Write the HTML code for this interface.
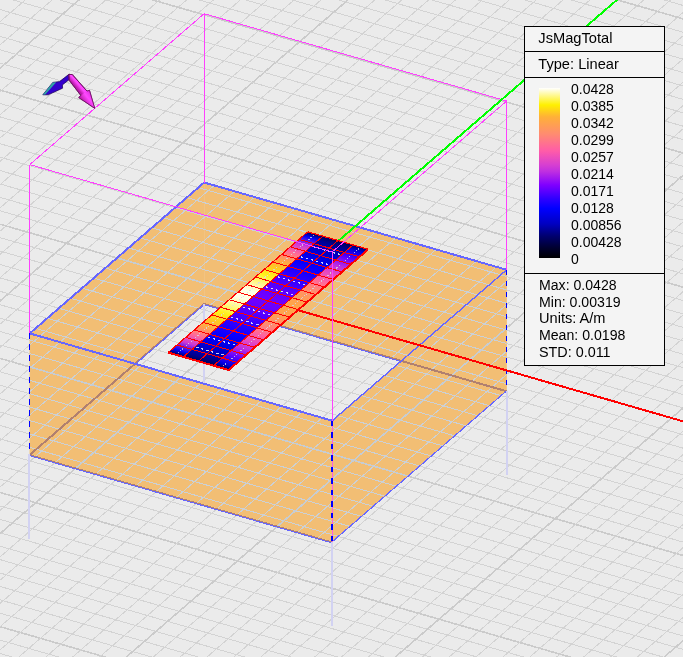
<!DOCTYPE html><html><head><meta charset="utf-8"><style>html,body{margin:0;padding:0;background:#ebebeb;overflow:hidden}svg{display:block;will-change:transform} line{shape-rendering:crispEdges}.t{font-family:"Liberation Sans",sans-serif;font-size:13px;fill:#000}</style></head><body>
<svg width="683" height="657" viewBox="0 0 683 657">
<rect width="683" height="657" fill="#ebebeb"/>
<defs><clipPath id="wc"><polygon points="204.15,182.5 29.75,333.4 29.75,454.4 204.15,303.5"/><polygon points="204.15,182.5 506.65,269.8 506.65,390.8 204.15,303.5"/><polygon points="29.75,333.4 332.25,420.7 332.25,541.7 29.75,454.4"/><polygon points="332.25,420.7 506.65,269.8 506.65,390.8 332.25,541.7"/></clipPath></defs>
<g><line x1="-2244.4" y1="381.4" x2="1385.6" y2="1429" stroke="#cbcbcb" stroke-width="1.6"/><line x1="-1988.2" y1="857.8" x2="104.6" y2="-953" stroke="#cbcbcb" stroke-width="1.6"/><line x1="-2232.77" y1="371.34" x2="1397.23" y2="1418.94" stroke="#d3d3d3" stroke-width="1"/><line x1="-1968.03" y1="863.62" x2="124.77" y2="-947.18" stroke="#d3d3d3" stroke-width="1"/><line x1="-2221.15" y1="361.28" x2="1408.85" y2="1408.88" stroke="#d3d3d3" stroke-width="1"/><line x1="-1947.87" y1="869.44" x2="144.93" y2="-941.36" stroke="#d3d3d3" stroke-width="1"/><line x1="-2209.52" y1="351.22" x2="1420.48" y2="1398.82" stroke="#d3d3d3" stroke-width="1"/><line x1="-1927.7" y1="875.26" x2="165.1" y2="-935.54" stroke="#d3d3d3" stroke-width="1"/><line x1="-2197.89" y1="341.16" x2="1432.11" y2="1388.76" stroke="#d3d3d3" stroke-width="1"/><line x1="-1907.53" y1="881.08" x2="185.27" y2="-929.72" stroke="#d3d3d3" stroke-width="1"/><line x1="-2186.27" y1="331.1" x2="1443.73" y2="1378.7" stroke="#d3d3d3" stroke-width="1"/><line x1="-1887.37" y1="886.9" x2="205.43" y2="-923.9" stroke="#d3d3d3" stroke-width="1"/><line x1="-2174.64" y1="321.04" x2="1455.36" y2="1368.64" stroke="#d3d3d3" stroke-width="1"/><line x1="-1867.2" y1="892.72" x2="225.6" y2="-918.08" stroke="#d3d3d3" stroke-width="1"/><line x1="-2163.01" y1="310.98" x2="1466.99" y2="1358.58" stroke="#d3d3d3" stroke-width="1"/><line x1="-1847.03" y1="898.54" x2="245.77" y2="-912.26" stroke="#d3d3d3" stroke-width="1"/><line x1="-2151.39" y1="300.92" x2="1478.61" y2="1348.52" stroke="#d3d3d3" stroke-width="1"/><line x1="-1826.87" y1="904.36" x2="265.93" y2="-906.44" stroke="#d3d3d3" stroke-width="1"/><line x1="-2139.76" y1="290.86" x2="1490.24" y2="1338.46" stroke="#d3d3d3" stroke-width="1"/><line x1="-1806.7" y1="910.18" x2="286.1" y2="-900.62" stroke="#d3d3d3" stroke-width="1"/><line x1="-2128.13" y1="280.8" x2="1501.87" y2="1328.4" stroke="#cbcbcb" stroke-width="1.6"/><line x1="-1786.53" y1="916" x2="306.27" y2="-894.8" stroke="#cbcbcb" stroke-width="1.6"/><line x1="-2116.51" y1="270.74" x2="1513.49" y2="1318.34" stroke="#d3d3d3" stroke-width="1"/><line x1="-1766.37" y1="921.82" x2="326.43" y2="-888.98" stroke="#d3d3d3" stroke-width="1"/><line x1="-2104.88" y1="260.68" x2="1525.12" y2="1308.28" stroke="#d3d3d3" stroke-width="1"/><line x1="-1746.2" y1="927.64" x2="346.6" y2="-883.16" stroke="#d3d3d3" stroke-width="1"/><line x1="-2093.25" y1="250.62" x2="1536.75" y2="1298.22" stroke="#d3d3d3" stroke-width="1"/><line x1="-1726.03" y1="933.46" x2="366.77" y2="-877.34" stroke="#d3d3d3" stroke-width="1"/><line x1="-2081.63" y1="240.56" x2="1548.37" y2="1288.16" stroke="#d3d3d3" stroke-width="1"/><line x1="-1705.87" y1="939.28" x2="386.93" y2="-871.52" stroke="#d3d3d3" stroke-width="1"/><line x1="-2070" y1="230.5" x2="1560" y2="1278.1" stroke="#d3d3d3" stroke-width="1"/><line x1="-1685.7" y1="945.1" x2="407.1" y2="-865.7" stroke="#d3d3d3" stroke-width="1"/><line x1="-2058.37" y1="220.44" x2="1571.63" y2="1268.04" stroke="#d3d3d3" stroke-width="1"/><line x1="-1665.53" y1="950.92" x2="427.27" y2="-859.88" stroke="#d3d3d3" stroke-width="1"/><line x1="-2046.75" y1="210.38" x2="1583.25" y2="1257.98" stroke="#d3d3d3" stroke-width="1"/><line x1="-1645.37" y1="956.74" x2="447.43" y2="-854.06" stroke="#d3d3d3" stroke-width="1"/><line x1="-2035.12" y1="200.32" x2="1594.88" y2="1247.92" stroke="#d3d3d3" stroke-width="1"/><line x1="-1625.2" y1="962.56" x2="467.6" y2="-848.24" stroke="#d3d3d3" stroke-width="1"/><line x1="-2023.49" y1="190.26" x2="1606.51" y2="1237.86" stroke="#d3d3d3" stroke-width="1"/><line x1="-1605.03" y1="968.38" x2="487.77" y2="-842.42" stroke="#d3d3d3" stroke-width="1"/><line x1="-2011.87" y1="180.2" x2="1618.13" y2="1227.8" stroke="#cbcbcb" stroke-width="1.6"/><line x1="-1584.87" y1="974.2" x2="507.93" y2="-836.6" stroke="#cbcbcb" stroke-width="1.6"/><line x1="-2000.24" y1="170.14" x2="1629.76" y2="1217.74" stroke="#d3d3d3" stroke-width="1"/><line x1="-1564.7" y1="980.02" x2="528.1" y2="-830.78" stroke="#d3d3d3" stroke-width="1"/><line x1="-1988.61" y1="160.08" x2="1641.39" y2="1207.68" stroke="#d3d3d3" stroke-width="1"/><line x1="-1544.53" y1="985.84" x2="548.27" y2="-824.96" stroke="#d3d3d3" stroke-width="1"/><line x1="-1976.99" y1="150.02" x2="1653.01" y2="1197.62" stroke="#d3d3d3" stroke-width="1"/><line x1="-1524.37" y1="991.66" x2="568.43" y2="-819.14" stroke="#d3d3d3" stroke-width="1"/><line x1="-1965.36" y1="139.96" x2="1664.64" y2="1187.56" stroke="#d3d3d3" stroke-width="1"/><line x1="-1504.2" y1="997.48" x2="588.6" y2="-813.32" stroke="#d3d3d3" stroke-width="1"/><line x1="-1953.73" y1="129.9" x2="1676.27" y2="1177.5" stroke="#d3d3d3" stroke-width="1"/><line x1="-1484.03" y1="1003.3" x2="608.77" y2="-807.5" stroke="#d3d3d3" stroke-width="1"/><line x1="-1942.11" y1="119.84" x2="1687.89" y2="1167.44" stroke="#d3d3d3" stroke-width="1"/><line x1="-1463.87" y1="1009.12" x2="628.93" y2="-801.68" stroke="#d3d3d3" stroke-width="1"/><line x1="-1930.48" y1="109.78" x2="1699.52" y2="1157.38" stroke="#d3d3d3" stroke-width="1"/><line x1="-1443.7" y1="1014.94" x2="649.1" y2="-795.86" stroke="#d3d3d3" stroke-width="1"/><line x1="-1918.85" y1="99.72" x2="1711.15" y2="1147.32" stroke="#d3d3d3" stroke-width="1"/><line x1="-1423.53" y1="1020.76" x2="669.27" y2="-790.04" stroke="#d3d3d3" stroke-width="1"/><line x1="-1907.23" y1="89.66" x2="1722.77" y2="1137.26" stroke="#d3d3d3" stroke-width="1"/><line x1="-1403.37" y1="1026.58" x2="689.43" y2="-784.22" stroke="#d3d3d3" stroke-width="1"/><line x1="-1895.6" y1="79.6" x2="1734.4" y2="1127.2" stroke="#cbcbcb" stroke-width="1.6"/><line x1="-1383.2" y1="1032.4" x2="709.6" y2="-778.4" stroke="#cbcbcb" stroke-width="1.6"/><line x1="-1883.97" y1="69.54" x2="1746.03" y2="1117.14" stroke="#d3d3d3" stroke-width="1"/><line x1="-1363.03" y1="1038.22" x2="729.77" y2="-772.58" stroke="#d3d3d3" stroke-width="1"/><line x1="-1872.35" y1="59.48" x2="1757.65" y2="1107.08" stroke="#d3d3d3" stroke-width="1"/><line x1="-1342.87" y1="1044.04" x2="749.93" y2="-766.76" stroke="#d3d3d3" stroke-width="1"/><line x1="-1860.72" y1="49.42" x2="1769.28" y2="1097.02" stroke="#d3d3d3" stroke-width="1"/><line x1="-1322.7" y1="1049.86" x2="770.1" y2="-760.94" stroke="#d3d3d3" stroke-width="1"/><line x1="-1849.09" y1="39.36" x2="1780.91" y2="1086.96" stroke="#d3d3d3" stroke-width="1"/><line x1="-1302.53" y1="1055.68" x2="790.27" y2="-755.12" stroke="#d3d3d3" stroke-width="1"/><line x1="-1837.47" y1="29.3" x2="1792.53" y2="1076.9" stroke="#d3d3d3" stroke-width="1"/><line x1="-1282.37" y1="1061.5" x2="810.43" y2="-749.3" stroke="#d3d3d3" stroke-width="1"/><line x1="-1825.84" y1="19.24" x2="1804.16" y2="1066.84" stroke="#d3d3d3" stroke-width="1"/><line x1="-1262.2" y1="1067.32" x2="830.6" y2="-743.48" stroke="#d3d3d3" stroke-width="1"/><line x1="-1814.21" y1="9.18" x2="1815.79" y2="1056.78" stroke="#d3d3d3" stroke-width="1"/><line x1="-1242.03" y1="1073.14" x2="850.77" y2="-737.66" stroke="#d3d3d3" stroke-width="1"/><line x1="-1802.59" y1="-0.88" x2="1827.41" y2="1046.72" stroke="#d3d3d3" stroke-width="1"/><line x1="-1221.87" y1="1078.96" x2="870.93" y2="-731.84" stroke="#d3d3d3" stroke-width="1"/><line x1="-1790.96" y1="-10.94" x2="1839.04" y2="1036.66" stroke="#d3d3d3" stroke-width="1"/><line x1="-1201.7" y1="1084.78" x2="891.1" y2="-726.02" stroke="#d3d3d3" stroke-width="1"/><line x1="-1779.33" y1="-21" x2="1850.67" y2="1026.6" stroke="#cbcbcb" stroke-width="1.6"/><line x1="-1181.53" y1="1090.6" x2="911.27" y2="-720.2" stroke="#cbcbcb" stroke-width="1.6"/><line x1="-1767.71" y1="-31.06" x2="1862.29" y2="1016.54" stroke="#d3d3d3" stroke-width="1"/><line x1="-1161.37" y1="1096.42" x2="931.43" y2="-714.38" stroke="#d3d3d3" stroke-width="1"/><line x1="-1756.08" y1="-41.12" x2="1873.92" y2="1006.48" stroke="#d3d3d3" stroke-width="1"/><line x1="-1141.2" y1="1102.24" x2="951.6" y2="-708.56" stroke="#d3d3d3" stroke-width="1"/><line x1="-1744.45" y1="-51.18" x2="1885.55" y2="996.42" stroke="#d3d3d3" stroke-width="1"/><line x1="-1121.03" y1="1108.06" x2="971.77" y2="-702.74" stroke="#d3d3d3" stroke-width="1"/><line x1="-1732.83" y1="-61.24" x2="1897.17" y2="986.36" stroke="#d3d3d3" stroke-width="1"/><line x1="-1100.87" y1="1113.88" x2="991.93" y2="-696.92" stroke="#d3d3d3" stroke-width="1"/><line x1="-1721.2" y1="-71.3" x2="1908.8" y2="976.3" stroke="#d3d3d3" stroke-width="1"/><line x1="-1080.7" y1="1119.7" x2="1012.1" y2="-691.1" stroke="#d3d3d3" stroke-width="1"/><line x1="-1709.57" y1="-81.36" x2="1920.43" y2="966.24" stroke="#d3d3d3" stroke-width="1"/><line x1="-1060.53" y1="1125.52" x2="1032.27" y2="-685.28" stroke="#d3d3d3" stroke-width="1"/><line x1="-1697.95" y1="-91.42" x2="1932.05" y2="956.18" stroke="#d3d3d3" stroke-width="1"/><line x1="-1040.37" y1="1131.34" x2="1052.43" y2="-679.46" stroke="#d3d3d3" stroke-width="1"/><line x1="-1686.32" y1="-101.48" x2="1943.68" y2="946.12" stroke="#d3d3d3" stroke-width="1"/><line x1="-1020.2" y1="1137.16" x2="1072.6" y2="-673.64" stroke="#d3d3d3" stroke-width="1"/><line x1="-1674.69" y1="-111.54" x2="1955.31" y2="936.06" stroke="#d3d3d3" stroke-width="1"/><line x1="-1000.03" y1="1142.98" x2="1092.77" y2="-667.82" stroke="#d3d3d3" stroke-width="1"/><line x1="-1663.07" y1="-121.6" x2="1966.93" y2="926" stroke="#cbcbcb" stroke-width="1.6"/><line x1="-979.87" y1="1148.8" x2="1112.93" y2="-662" stroke="#cbcbcb" stroke-width="1.6"/><line x1="-1651.44" y1="-131.66" x2="1978.56" y2="915.94" stroke="#d3d3d3" stroke-width="1"/><line x1="-959.7" y1="1154.62" x2="1133.1" y2="-656.18" stroke="#d3d3d3" stroke-width="1"/><line x1="-1639.81" y1="-141.72" x2="1990.19" y2="905.88" stroke="#d3d3d3" stroke-width="1"/><line x1="-939.53" y1="1160.44" x2="1153.27" y2="-650.36" stroke="#d3d3d3" stroke-width="1"/><line x1="-1628.19" y1="-151.78" x2="2001.81" y2="895.82" stroke="#d3d3d3" stroke-width="1"/><line x1="-919.37" y1="1166.26" x2="1173.43" y2="-644.54" stroke="#d3d3d3" stroke-width="1"/><line x1="-1616.56" y1="-161.84" x2="2013.44" y2="885.76" stroke="#d3d3d3" stroke-width="1"/><line x1="-899.2" y1="1172.08" x2="1193.6" y2="-638.72" stroke="#d3d3d3" stroke-width="1"/><line x1="-1604.93" y1="-171.9" x2="2025.07" y2="875.7" stroke="#d3d3d3" stroke-width="1"/><line x1="-879.03" y1="1177.9" x2="1213.77" y2="-632.9" stroke="#d3d3d3" stroke-width="1"/><line x1="-1593.31" y1="-181.96" x2="2036.69" y2="865.64" stroke="#d3d3d3" stroke-width="1"/><line x1="-858.87" y1="1183.72" x2="1233.93" y2="-627.08" stroke="#d3d3d3" stroke-width="1"/><line x1="-1581.68" y1="-192.02" x2="2048.32" y2="855.58" stroke="#d3d3d3" stroke-width="1"/><line x1="-838.7" y1="1189.54" x2="1254.1" y2="-621.26" stroke="#d3d3d3" stroke-width="1"/><line x1="-1570.05" y1="-202.08" x2="2059.95" y2="845.52" stroke="#d3d3d3" stroke-width="1"/><line x1="-818.53" y1="1195.36" x2="1274.27" y2="-615.44" stroke="#d3d3d3" stroke-width="1"/><line x1="-1558.43" y1="-212.14" x2="2071.57" y2="835.46" stroke="#d3d3d3" stroke-width="1"/><line x1="-798.37" y1="1201.18" x2="1294.43" y2="-609.62" stroke="#d3d3d3" stroke-width="1"/><line x1="-1546.8" y1="-222.2" x2="2083.2" y2="825.4" stroke="#cbcbcb" stroke-width="1.6"/><line x1="-778.2" y1="1207" x2="1314.6" y2="-603.8" stroke="#cbcbcb" stroke-width="1.6"/><line x1="-1535.17" y1="-232.26" x2="2094.83" y2="815.34" stroke="#d3d3d3" stroke-width="1"/><line x1="-758.03" y1="1212.82" x2="1334.77" y2="-597.98" stroke="#d3d3d3" stroke-width="1"/><line x1="-1523.55" y1="-242.32" x2="2106.45" y2="805.28" stroke="#d3d3d3" stroke-width="1"/><line x1="-737.87" y1="1218.64" x2="1354.93" y2="-592.16" stroke="#d3d3d3" stroke-width="1"/><line x1="-1511.92" y1="-252.38" x2="2118.08" y2="795.22" stroke="#d3d3d3" stroke-width="1"/><line x1="-717.7" y1="1224.46" x2="1375.1" y2="-586.34" stroke="#d3d3d3" stroke-width="1"/><line x1="-1500.29" y1="-262.44" x2="2129.71" y2="785.16" stroke="#d3d3d3" stroke-width="1"/><line x1="-697.53" y1="1230.28" x2="1395.27" y2="-580.52" stroke="#d3d3d3" stroke-width="1"/><line x1="-1488.67" y1="-272.5" x2="2141.33" y2="775.1" stroke="#d3d3d3" stroke-width="1"/><line x1="-677.37" y1="1236.1" x2="1415.43" y2="-574.7" stroke="#d3d3d3" stroke-width="1"/><line x1="-1477.04" y1="-282.56" x2="2152.96" y2="765.04" stroke="#d3d3d3" stroke-width="1"/><line x1="-657.2" y1="1241.92" x2="1435.6" y2="-568.88" stroke="#d3d3d3" stroke-width="1"/><line x1="-1465.41" y1="-292.62" x2="2164.59" y2="754.98" stroke="#d3d3d3" stroke-width="1"/><line x1="-637.03" y1="1247.74" x2="1455.77" y2="-563.06" stroke="#d3d3d3" stroke-width="1"/><line x1="-1453.79" y1="-302.68" x2="2176.21" y2="744.92" stroke="#d3d3d3" stroke-width="1"/><line x1="-616.87" y1="1253.56" x2="1475.93" y2="-557.24" stroke="#d3d3d3" stroke-width="1"/><line x1="-1442.16" y1="-312.74" x2="2187.84" y2="734.86" stroke="#d3d3d3" stroke-width="1"/><line x1="-596.7" y1="1259.38" x2="1496.1" y2="-551.42" stroke="#d3d3d3" stroke-width="1"/><line x1="-1430.53" y1="-322.8" x2="2199.47" y2="724.8" stroke="#cbcbcb" stroke-width="1.6"/><line x1="-576.53" y1="1265.2" x2="1516.27" y2="-545.6" stroke="#cbcbcb" stroke-width="1.6"/><line x1="-1418.91" y1="-332.86" x2="2211.09" y2="714.74" stroke="#d3d3d3" stroke-width="1"/><line x1="-556.37" y1="1271.02" x2="1536.43" y2="-539.78" stroke="#d3d3d3" stroke-width="1"/><line x1="-1407.28" y1="-342.92" x2="2222.72" y2="704.68" stroke="#d3d3d3" stroke-width="1"/><line x1="-536.2" y1="1276.84" x2="1556.6" y2="-533.96" stroke="#d3d3d3" stroke-width="1"/><line x1="-1395.65" y1="-352.98" x2="2234.35" y2="694.62" stroke="#d3d3d3" stroke-width="1"/><line x1="-516.03" y1="1282.66" x2="1576.77" y2="-528.14" stroke="#d3d3d3" stroke-width="1"/><line x1="-1384.03" y1="-363.04" x2="2245.97" y2="684.56" stroke="#d3d3d3" stroke-width="1"/><line x1="-495.87" y1="1288.48" x2="1596.93" y2="-522.32" stroke="#d3d3d3" stroke-width="1"/><line x1="-1372.4" y1="-373.1" x2="2257.6" y2="674.5" stroke="#d3d3d3" stroke-width="1"/><line x1="-475.7" y1="1294.3" x2="1617.1" y2="-516.5" stroke="#d3d3d3" stroke-width="1"/><line x1="-1360.77" y1="-383.16" x2="2269.23" y2="664.44" stroke="#d3d3d3" stroke-width="1"/><line x1="-455.53" y1="1300.12" x2="1637.27" y2="-510.68" stroke="#d3d3d3" stroke-width="1"/><line x1="-1349.15" y1="-393.22" x2="2280.85" y2="654.38" stroke="#d3d3d3" stroke-width="1"/><line x1="-435.37" y1="1305.94" x2="1657.43" y2="-504.86" stroke="#d3d3d3" stroke-width="1"/><line x1="-1337.52" y1="-403.28" x2="2292.48" y2="644.32" stroke="#d3d3d3" stroke-width="1"/><line x1="-415.2" y1="1311.76" x2="1677.6" y2="-499.04" stroke="#d3d3d3" stroke-width="1"/><line x1="-1325.89" y1="-413.34" x2="2304.11" y2="634.26" stroke="#d3d3d3" stroke-width="1"/><line x1="-395.03" y1="1317.58" x2="1697.77" y2="-493.22" stroke="#d3d3d3" stroke-width="1"/><line x1="-1314.27" y1="-423.4" x2="2315.73" y2="624.2" stroke="#cbcbcb" stroke-width="1.6"/><line x1="-374.87" y1="1323.4" x2="1717.93" y2="-487.4" stroke="#cbcbcb" stroke-width="1.6"/><line x1="-1302.64" y1="-433.46" x2="2327.36" y2="614.14" stroke="#d3d3d3" stroke-width="1"/><line x1="-354.7" y1="1329.22" x2="1738.1" y2="-481.58" stroke="#d3d3d3" stroke-width="1"/><line x1="-1291.01" y1="-443.52" x2="2338.99" y2="604.08" stroke="#d3d3d3" stroke-width="1"/><line x1="-334.53" y1="1335.04" x2="1758.27" y2="-475.76" stroke="#d3d3d3" stroke-width="1"/><line x1="-1279.39" y1="-453.58" x2="2350.61" y2="594.02" stroke="#d3d3d3" stroke-width="1"/><line x1="-314.37" y1="1340.86" x2="1778.43" y2="-469.94" stroke="#d3d3d3" stroke-width="1"/><line x1="-1267.76" y1="-463.64" x2="2362.24" y2="583.96" stroke="#d3d3d3" stroke-width="1"/><line x1="-294.2" y1="1346.68" x2="1798.6" y2="-464.12" stroke="#d3d3d3" stroke-width="1"/><line x1="-1256.13" y1="-473.7" x2="2373.87" y2="573.9" stroke="#d3d3d3" stroke-width="1"/><line x1="-274.03" y1="1352.5" x2="1818.77" y2="-458.3" stroke="#d3d3d3" stroke-width="1"/><line x1="-1244.51" y1="-483.76" x2="2385.49" y2="563.84" stroke="#d3d3d3" stroke-width="1"/><line x1="-253.87" y1="1358.32" x2="1838.93" y2="-452.48" stroke="#d3d3d3" stroke-width="1"/><line x1="-1232.88" y1="-493.82" x2="2397.12" y2="553.78" stroke="#d3d3d3" stroke-width="1"/><line x1="-233.7" y1="1364.14" x2="1859.1" y2="-446.66" stroke="#d3d3d3" stroke-width="1"/><line x1="-1221.25" y1="-503.88" x2="2408.75" y2="543.72" stroke="#d3d3d3" stroke-width="1"/><line x1="-213.53" y1="1369.96" x2="1879.27" y2="-440.84" stroke="#d3d3d3" stroke-width="1"/><line x1="-1209.63" y1="-513.94" x2="2420.37" y2="533.66" stroke="#d3d3d3" stroke-width="1"/><line x1="-193.37" y1="1375.78" x2="1899.43" y2="-435.02" stroke="#d3d3d3" stroke-width="1"/><line x1="-1198" y1="-524" x2="2432" y2="523.6" stroke="#cbcbcb" stroke-width="1.6"/><line x1="-173.2" y1="1381.6" x2="1919.6" y2="-429.2" stroke="#cbcbcb" stroke-width="1.6"/><line x1="-1186.37" y1="-534.06" x2="2443.63" y2="513.54" stroke="#d3d3d3" stroke-width="1"/><line x1="-153.03" y1="1387.42" x2="1939.77" y2="-423.38" stroke="#d3d3d3" stroke-width="1"/><line x1="-1174.75" y1="-544.12" x2="2455.25" y2="503.48" stroke="#d3d3d3" stroke-width="1"/><line x1="-132.87" y1="1393.24" x2="1959.93" y2="-417.56" stroke="#d3d3d3" stroke-width="1"/><line x1="-1163.12" y1="-554.18" x2="2466.88" y2="493.42" stroke="#d3d3d3" stroke-width="1"/><line x1="-112.7" y1="1399.06" x2="1980.1" y2="-411.74" stroke="#d3d3d3" stroke-width="1"/><line x1="-1151.49" y1="-564.24" x2="2478.51" y2="483.36" stroke="#d3d3d3" stroke-width="1"/><line x1="-92.53" y1="1404.88" x2="2000.27" y2="-405.92" stroke="#d3d3d3" stroke-width="1"/><line x1="-1139.87" y1="-574.3" x2="2490.13" y2="473.3" stroke="#d3d3d3" stroke-width="1"/><line x1="-72.37" y1="1410.7" x2="2020.43" y2="-400.1" stroke="#d3d3d3" stroke-width="1"/><line x1="-1128.24" y1="-584.36" x2="2501.76" y2="463.24" stroke="#d3d3d3" stroke-width="1"/><line x1="-52.2" y1="1416.52" x2="2040.6" y2="-394.28" stroke="#d3d3d3" stroke-width="1"/><line x1="-1116.61" y1="-594.42" x2="2513.39" y2="453.18" stroke="#d3d3d3" stroke-width="1"/><line x1="-32.03" y1="1422.34" x2="2060.77" y2="-388.46" stroke="#d3d3d3" stroke-width="1"/><line x1="-1104.99" y1="-604.48" x2="2525.01" y2="443.12" stroke="#d3d3d3" stroke-width="1"/><line x1="-11.87" y1="1428.16" x2="2080.93" y2="-382.64" stroke="#d3d3d3" stroke-width="1"/><line x1="-1093.36" y1="-614.54" x2="2536.64" y2="433.06" stroke="#d3d3d3" stroke-width="1"/><line x1="8.3" y1="1433.98" x2="2101.1" y2="-376.82" stroke="#d3d3d3" stroke-width="1"/><line x1="-1081.73" y1="-624.6" x2="2548.27" y2="423" stroke="#cbcbcb" stroke-width="1.6"/><line x1="28.47" y1="1439.8" x2="2121.27" y2="-371" stroke="#cbcbcb" stroke-width="1.6"/><line x1="-1070.11" y1="-634.66" x2="2559.89" y2="412.94" stroke="#d3d3d3" stroke-width="1"/><line x1="48.63" y1="1445.62" x2="2141.43" y2="-365.18" stroke="#d3d3d3" stroke-width="1"/><line x1="-1058.48" y1="-644.72" x2="2571.52" y2="402.88" stroke="#d3d3d3" stroke-width="1"/><line x1="68.8" y1="1451.44" x2="2161.6" y2="-359.36" stroke="#d3d3d3" stroke-width="1"/><line x1="-1046.85" y1="-654.78" x2="2583.15" y2="392.82" stroke="#d3d3d3" stroke-width="1"/><line x1="88.97" y1="1457.26" x2="2181.77" y2="-353.54" stroke="#d3d3d3" stroke-width="1"/><line x1="-1035.23" y1="-664.84" x2="2594.77" y2="382.76" stroke="#d3d3d3" stroke-width="1"/><line x1="109.13" y1="1463.08" x2="2201.93" y2="-347.72" stroke="#d3d3d3" stroke-width="1"/><line x1="-1023.6" y1="-674.9" x2="2606.4" y2="372.7" stroke="#d3d3d3" stroke-width="1"/><line x1="129.3" y1="1468.9" x2="2222.1" y2="-341.9" stroke="#d3d3d3" stroke-width="1"/><line x1="-1011.97" y1="-684.96" x2="2618.03" y2="362.64" stroke="#d3d3d3" stroke-width="1"/><line x1="149.47" y1="1474.72" x2="2242.27" y2="-336.08" stroke="#d3d3d3" stroke-width="1"/><line x1="-1000.35" y1="-695.02" x2="2629.65" y2="352.58" stroke="#d3d3d3" stroke-width="1"/><line x1="169.63" y1="1480.54" x2="2262.43" y2="-330.26" stroke="#d3d3d3" stroke-width="1"/><line x1="-988.72" y1="-705.08" x2="2641.28" y2="342.52" stroke="#d3d3d3" stroke-width="1"/><line x1="189.8" y1="1486.36" x2="2282.6" y2="-324.44" stroke="#d3d3d3" stroke-width="1"/><line x1="-977.09" y1="-715.14" x2="2652.91" y2="332.46" stroke="#d3d3d3" stroke-width="1"/><line x1="209.97" y1="1492.18" x2="2302.77" y2="-318.62" stroke="#d3d3d3" stroke-width="1"/><line x1="-965.47" y1="-725.2" x2="2664.53" y2="322.4" stroke="#cbcbcb" stroke-width="1.6"/><line x1="230.13" y1="1498" x2="2322.93" y2="-312.8" stroke="#cbcbcb" stroke-width="1.6"/><line x1="-953.84" y1="-735.26" x2="2676.16" y2="312.34" stroke="#d3d3d3" stroke-width="1"/><line x1="250.3" y1="1503.82" x2="2343.1" y2="-306.98" stroke="#d3d3d3" stroke-width="1"/><line x1="-942.21" y1="-745.32" x2="2687.79" y2="302.28" stroke="#d3d3d3" stroke-width="1"/><line x1="270.47" y1="1509.64" x2="2363.27" y2="-301.16" stroke="#d3d3d3" stroke-width="1"/><line x1="-930.59" y1="-755.38" x2="2699.41" y2="292.22" stroke="#d3d3d3" stroke-width="1"/><line x1="290.63" y1="1515.46" x2="2383.43" y2="-295.34" stroke="#d3d3d3" stroke-width="1"/><line x1="-918.96" y1="-765.44" x2="2711.04" y2="282.16" stroke="#d3d3d3" stroke-width="1"/><line x1="310.8" y1="1521.28" x2="2403.6" y2="-289.52" stroke="#d3d3d3" stroke-width="1"/><line x1="-907.33" y1="-775.5" x2="2722.67" y2="272.1" stroke="#d3d3d3" stroke-width="1"/><line x1="330.97" y1="1527.1" x2="2423.77" y2="-283.7" stroke="#d3d3d3" stroke-width="1"/><line x1="-895.71" y1="-785.56" x2="2734.29" y2="262.04" stroke="#d3d3d3" stroke-width="1"/><line x1="351.13" y1="1532.92" x2="2443.93" y2="-277.88" stroke="#d3d3d3" stroke-width="1"/><line x1="-884.08" y1="-795.62" x2="2745.92" y2="251.98" stroke="#d3d3d3" stroke-width="1"/><line x1="371.3" y1="1538.74" x2="2464.1" y2="-272.06" stroke="#d3d3d3" stroke-width="1"/><line x1="-872.45" y1="-805.68" x2="2757.55" y2="241.92" stroke="#d3d3d3" stroke-width="1"/><line x1="391.47" y1="1544.56" x2="2484.27" y2="-266.24" stroke="#d3d3d3" stroke-width="1"/><line x1="-860.83" y1="-815.74" x2="2769.17" y2="231.86" stroke="#d3d3d3" stroke-width="1"/><line x1="411.63" y1="1550.38" x2="2504.43" y2="-260.42" stroke="#d3d3d3" stroke-width="1"/><line x1="-849.2" y1="-825.8" x2="2780.8" y2="221.8" stroke="#cbcbcb" stroke-width="1.6"/><line x1="431.8" y1="1556.2" x2="2524.6" y2="-254.6" stroke="#cbcbcb" stroke-width="1.6"/></g>
<g fill="#f2be74"><polygon points="204.15,182.5 29.75,333.4 29.75,454.4 204.15,303.5"/><polygon points="204.15,182.5 506.65,269.8 506.65,390.8 204.15,303.5"/><polygon points="29.75,333.4 332.25,420.7 332.25,541.7 29.75,454.4"/><polygon points="332.25,420.7 506.65,269.8 506.65,390.8 332.25,541.7"/></g>
<g clip-path="url(#wc)"><line x1="-2244.4" y1="381.4" x2="1385.6" y2="1429" stroke="#c6ccd2" stroke-width="1.6"/><line x1="-1988.2" y1="857.8" x2="104.6" y2="-953" stroke="#c6ccd2" stroke-width="1.6"/><line x1="-2232.77" y1="371.34" x2="1397.23" y2="1418.94" stroke="#cbd0d5" stroke-width="1"/><line x1="-1968.03" y1="863.62" x2="124.77" y2="-947.18" stroke="#cbd0d5" stroke-width="1"/><line x1="-2221.15" y1="361.28" x2="1408.85" y2="1408.88" stroke="#cbd0d5" stroke-width="1"/><line x1="-1947.87" y1="869.44" x2="144.93" y2="-941.36" stroke="#cbd0d5" stroke-width="1"/><line x1="-2209.52" y1="351.22" x2="1420.48" y2="1398.82" stroke="#cbd0d5" stroke-width="1"/><line x1="-1927.7" y1="875.26" x2="165.1" y2="-935.54" stroke="#cbd0d5" stroke-width="1"/><line x1="-2197.89" y1="341.16" x2="1432.11" y2="1388.76" stroke="#cbd0d5" stroke-width="1"/><line x1="-1907.53" y1="881.08" x2="185.27" y2="-929.72" stroke="#cbd0d5" stroke-width="1"/><line x1="-2186.27" y1="331.1" x2="1443.73" y2="1378.7" stroke="#cbd0d5" stroke-width="1"/><line x1="-1887.37" y1="886.9" x2="205.43" y2="-923.9" stroke="#cbd0d5" stroke-width="1"/><line x1="-2174.64" y1="321.04" x2="1455.36" y2="1368.64" stroke="#cbd0d5" stroke-width="1"/><line x1="-1867.2" y1="892.72" x2="225.6" y2="-918.08" stroke="#cbd0d5" stroke-width="1"/><line x1="-2163.01" y1="310.98" x2="1466.99" y2="1358.58" stroke="#cbd0d5" stroke-width="1"/><line x1="-1847.03" y1="898.54" x2="245.77" y2="-912.26" stroke="#cbd0d5" stroke-width="1"/><line x1="-2151.39" y1="300.92" x2="1478.61" y2="1348.52" stroke="#cbd0d5" stroke-width="1"/><line x1="-1826.87" y1="904.36" x2="265.93" y2="-906.44" stroke="#cbd0d5" stroke-width="1"/><line x1="-2139.76" y1="290.86" x2="1490.24" y2="1338.46" stroke="#cbd0d5" stroke-width="1"/><line x1="-1806.7" y1="910.18" x2="286.1" y2="-900.62" stroke="#cbd0d5" stroke-width="1"/><line x1="-2128.13" y1="280.8" x2="1501.87" y2="1328.4" stroke="#c6ccd2" stroke-width="1.6"/><line x1="-1786.53" y1="916" x2="306.27" y2="-894.8" stroke="#c6ccd2" stroke-width="1.6"/><line x1="-2116.51" y1="270.74" x2="1513.49" y2="1318.34" stroke="#cbd0d5" stroke-width="1"/><line x1="-1766.37" y1="921.82" x2="326.43" y2="-888.98" stroke="#cbd0d5" stroke-width="1"/><line x1="-2104.88" y1="260.68" x2="1525.12" y2="1308.28" stroke="#cbd0d5" stroke-width="1"/><line x1="-1746.2" y1="927.64" x2="346.6" y2="-883.16" stroke="#cbd0d5" stroke-width="1"/><line x1="-2093.25" y1="250.62" x2="1536.75" y2="1298.22" stroke="#cbd0d5" stroke-width="1"/><line x1="-1726.03" y1="933.46" x2="366.77" y2="-877.34" stroke="#cbd0d5" stroke-width="1"/><line x1="-2081.63" y1="240.56" x2="1548.37" y2="1288.16" stroke="#cbd0d5" stroke-width="1"/><line x1="-1705.87" y1="939.28" x2="386.93" y2="-871.52" stroke="#cbd0d5" stroke-width="1"/><line x1="-2070" y1="230.5" x2="1560" y2="1278.1" stroke="#cbd0d5" stroke-width="1"/><line x1="-1685.7" y1="945.1" x2="407.1" y2="-865.7" stroke="#cbd0d5" stroke-width="1"/><line x1="-2058.37" y1="220.44" x2="1571.63" y2="1268.04" stroke="#cbd0d5" stroke-width="1"/><line x1="-1665.53" y1="950.92" x2="427.27" y2="-859.88" stroke="#cbd0d5" stroke-width="1"/><line x1="-2046.75" y1="210.38" x2="1583.25" y2="1257.98" stroke="#cbd0d5" stroke-width="1"/><line x1="-1645.37" y1="956.74" x2="447.43" y2="-854.06" stroke="#cbd0d5" stroke-width="1"/><line x1="-2035.12" y1="200.32" x2="1594.88" y2="1247.92" stroke="#cbd0d5" stroke-width="1"/><line x1="-1625.2" y1="962.56" x2="467.6" y2="-848.24" stroke="#cbd0d5" stroke-width="1"/><line x1="-2023.49" y1="190.26" x2="1606.51" y2="1237.86" stroke="#cbd0d5" stroke-width="1"/><line x1="-1605.03" y1="968.38" x2="487.77" y2="-842.42" stroke="#cbd0d5" stroke-width="1"/><line x1="-2011.87" y1="180.2" x2="1618.13" y2="1227.8" stroke="#c6ccd2" stroke-width="1.6"/><line x1="-1584.87" y1="974.2" x2="507.93" y2="-836.6" stroke="#c6ccd2" stroke-width="1.6"/><line x1="-2000.24" y1="170.14" x2="1629.76" y2="1217.74" stroke="#cbd0d5" stroke-width="1"/><line x1="-1564.7" y1="980.02" x2="528.1" y2="-830.78" stroke="#cbd0d5" stroke-width="1"/><line x1="-1988.61" y1="160.08" x2="1641.39" y2="1207.68" stroke="#cbd0d5" stroke-width="1"/><line x1="-1544.53" y1="985.84" x2="548.27" y2="-824.96" stroke="#cbd0d5" stroke-width="1"/><line x1="-1976.99" y1="150.02" x2="1653.01" y2="1197.62" stroke="#cbd0d5" stroke-width="1"/><line x1="-1524.37" y1="991.66" x2="568.43" y2="-819.14" stroke="#cbd0d5" stroke-width="1"/><line x1="-1965.36" y1="139.96" x2="1664.64" y2="1187.56" stroke="#cbd0d5" stroke-width="1"/><line x1="-1504.2" y1="997.48" x2="588.6" y2="-813.32" stroke="#cbd0d5" stroke-width="1"/><line x1="-1953.73" y1="129.9" x2="1676.27" y2="1177.5" stroke="#cbd0d5" stroke-width="1"/><line x1="-1484.03" y1="1003.3" x2="608.77" y2="-807.5" stroke="#cbd0d5" stroke-width="1"/><line x1="-1942.11" y1="119.84" x2="1687.89" y2="1167.44" stroke="#cbd0d5" stroke-width="1"/><line x1="-1463.87" y1="1009.12" x2="628.93" y2="-801.68" stroke="#cbd0d5" stroke-width="1"/><line x1="-1930.48" y1="109.78" x2="1699.52" y2="1157.38" stroke="#cbd0d5" stroke-width="1"/><line x1="-1443.7" y1="1014.94" x2="649.1" y2="-795.86" stroke="#cbd0d5" stroke-width="1"/><line x1="-1918.85" y1="99.72" x2="1711.15" y2="1147.32" stroke="#cbd0d5" stroke-width="1"/><line x1="-1423.53" y1="1020.76" x2="669.27" y2="-790.04" stroke="#cbd0d5" stroke-width="1"/><line x1="-1907.23" y1="89.66" x2="1722.77" y2="1137.26" stroke="#cbd0d5" stroke-width="1"/><line x1="-1403.37" y1="1026.58" x2="689.43" y2="-784.22" stroke="#cbd0d5" stroke-width="1"/><line x1="-1895.6" y1="79.6" x2="1734.4" y2="1127.2" stroke="#c6ccd2" stroke-width="1.6"/><line x1="-1383.2" y1="1032.4" x2="709.6" y2="-778.4" stroke="#c6ccd2" stroke-width="1.6"/><line x1="-1883.97" y1="69.54" x2="1746.03" y2="1117.14" stroke="#cbd0d5" stroke-width="1"/><line x1="-1363.03" y1="1038.22" x2="729.77" y2="-772.58" stroke="#cbd0d5" stroke-width="1"/><line x1="-1872.35" y1="59.48" x2="1757.65" y2="1107.08" stroke="#cbd0d5" stroke-width="1"/><line x1="-1342.87" y1="1044.04" x2="749.93" y2="-766.76" stroke="#cbd0d5" stroke-width="1"/><line x1="-1860.72" y1="49.42" x2="1769.28" y2="1097.02" stroke="#cbd0d5" stroke-width="1"/><line x1="-1322.7" y1="1049.86" x2="770.1" y2="-760.94" stroke="#cbd0d5" stroke-width="1"/><line x1="-1849.09" y1="39.36" x2="1780.91" y2="1086.96" stroke="#cbd0d5" stroke-width="1"/><line x1="-1302.53" y1="1055.68" x2="790.27" y2="-755.12" stroke="#cbd0d5" stroke-width="1"/><line x1="-1837.47" y1="29.3" x2="1792.53" y2="1076.9" stroke="#cbd0d5" stroke-width="1"/><line x1="-1282.37" y1="1061.5" x2="810.43" y2="-749.3" stroke="#cbd0d5" stroke-width="1"/><line x1="-1825.84" y1="19.24" x2="1804.16" y2="1066.84" stroke="#cbd0d5" stroke-width="1"/><line x1="-1262.2" y1="1067.32" x2="830.6" y2="-743.48" stroke="#cbd0d5" stroke-width="1"/><line x1="-1814.21" y1="9.18" x2="1815.79" y2="1056.78" stroke="#cbd0d5" stroke-width="1"/><line x1="-1242.03" y1="1073.14" x2="850.77" y2="-737.66" stroke="#cbd0d5" stroke-width="1"/><line x1="-1802.59" y1="-0.88" x2="1827.41" y2="1046.72" stroke="#cbd0d5" stroke-width="1"/><line x1="-1221.87" y1="1078.96" x2="870.93" y2="-731.84" stroke="#cbd0d5" stroke-width="1"/><line x1="-1790.96" y1="-10.94" x2="1839.04" y2="1036.66" stroke="#cbd0d5" stroke-width="1"/><line x1="-1201.7" y1="1084.78" x2="891.1" y2="-726.02" stroke="#cbd0d5" stroke-width="1"/><line x1="-1779.33" y1="-21" x2="1850.67" y2="1026.6" stroke="#c6ccd2" stroke-width="1.6"/><line x1="-1181.53" y1="1090.6" x2="911.27" y2="-720.2" stroke="#c6ccd2" stroke-width="1.6"/><line x1="-1767.71" y1="-31.06" x2="1862.29" y2="1016.54" stroke="#cbd0d5" stroke-width="1"/><line x1="-1161.37" y1="1096.42" x2="931.43" y2="-714.38" stroke="#cbd0d5" stroke-width="1"/><line x1="-1756.08" y1="-41.12" x2="1873.92" y2="1006.48" stroke="#cbd0d5" stroke-width="1"/><line x1="-1141.2" y1="1102.24" x2="951.6" y2="-708.56" stroke="#cbd0d5" stroke-width="1"/><line x1="-1744.45" y1="-51.18" x2="1885.55" y2="996.42" stroke="#cbd0d5" stroke-width="1"/><line x1="-1121.03" y1="1108.06" x2="971.77" y2="-702.74" stroke="#cbd0d5" stroke-width="1"/><line x1="-1732.83" y1="-61.24" x2="1897.17" y2="986.36" stroke="#cbd0d5" stroke-width="1"/><line x1="-1100.87" y1="1113.88" x2="991.93" y2="-696.92" stroke="#cbd0d5" stroke-width="1"/><line x1="-1721.2" y1="-71.3" x2="1908.8" y2="976.3" stroke="#cbd0d5" stroke-width="1"/><line x1="-1080.7" y1="1119.7" x2="1012.1" y2="-691.1" stroke="#cbd0d5" stroke-width="1"/><line x1="-1709.57" y1="-81.36" x2="1920.43" y2="966.24" stroke="#cbd0d5" stroke-width="1"/><line x1="-1060.53" y1="1125.52" x2="1032.27" y2="-685.28" stroke="#cbd0d5" stroke-width="1"/><line x1="-1697.95" y1="-91.42" x2="1932.05" y2="956.18" stroke="#cbd0d5" stroke-width="1"/><line x1="-1040.37" y1="1131.34" x2="1052.43" y2="-679.46" stroke="#cbd0d5" stroke-width="1"/><line x1="-1686.32" y1="-101.48" x2="1943.68" y2="946.12" stroke="#cbd0d5" stroke-width="1"/><line x1="-1020.2" y1="1137.16" x2="1072.6" y2="-673.64" stroke="#cbd0d5" stroke-width="1"/><line x1="-1674.69" y1="-111.54" x2="1955.31" y2="936.06" stroke="#cbd0d5" stroke-width="1"/><line x1="-1000.03" y1="1142.98" x2="1092.77" y2="-667.82" stroke="#cbd0d5" stroke-width="1"/><line x1="-1663.07" y1="-121.6" x2="1966.93" y2="926" stroke="#c6ccd2" stroke-width="1.6"/><line x1="-979.87" y1="1148.8" x2="1112.93" y2="-662" stroke="#c6ccd2" stroke-width="1.6"/><line x1="-1651.44" y1="-131.66" x2="1978.56" y2="915.94" stroke="#cbd0d5" stroke-width="1"/><line x1="-959.7" y1="1154.62" x2="1133.1" y2="-656.18" stroke="#cbd0d5" stroke-width="1"/><line x1="-1639.81" y1="-141.72" x2="1990.19" y2="905.88" stroke="#cbd0d5" stroke-width="1"/><line x1="-939.53" y1="1160.44" x2="1153.27" y2="-650.36" stroke="#cbd0d5" stroke-width="1"/><line x1="-1628.19" y1="-151.78" x2="2001.81" y2="895.82" stroke="#cbd0d5" stroke-width="1"/><line x1="-919.37" y1="1166.26" x2="1173.43" y2="-644.54" stroke="#cbd0d5" stroke-width="1"/><line x1="-1616.56" y1="-161.84" x2="2013.44" y2="885.76" stroke="#cbd0d5" stroke-width="1"/><line x1="-899.2" y1="1172.08" x2="1193.6" y2="-638.72" stroke="#cbd0d5" stroke-width="1"/><line x1="-1604.93" y1="-171.9" x2="2025.07" y2="875.7" stroke="#cbd0d5" stroke-width="1"/><line x1="-879.03" y1="1177.9" x2="1213.77" y2="-632.9" stroke="#cbd0d5" stroke-width="1"/><line x1="-1593.31" y1="-181.96" x2="2036.69" y2="865.64" stroke="#cbd0d5" stroke-width="1"/><line x1="-858.87" y1="1183.72" x2="1233.93" y2="-627.08" stroke="#cbd0d5" stroke-width="1"/><line x1="-1581.68" y1="-192.02" x2="2048.32" y2="855.58" stroke="#cbd0d5" stroke-width="1"/><line x1="-838.7" y1="1189.54" x2="1254.1" y2="-621.26" stroke="#cbd0d5" stroke-width="1"/><line x1="-1570.05" y1="-202.08" x2="2059.95" y2="845.52" stroke="#cbd0d5" stroke-width="1"/><line x1="-818.53" y1="1195.36" x2="1274.27" y2="-615.44" stroke="#cbd0d5" stroke-width="1"/><line x1="-1558.43" y1="-212.14" x2="2071.57" y2="835.46" stroke="#cbd0d5" stroke-width="1"/><line x1="-798.37" y1="1201.18" x2="1294.43" y2="-609.62" stroke="#cbd0d5" stroke-width="1"/><line x1="-1546.8" y1="-222.2" x2="2083.2" y2="825.4" stroke="#c6ccd2" stroke-width="1.6"/><line x1="-778.2" y1="1207" x2="1314.6" y2="-603.8" stroke="#c6ccd2" stroke-width="1.6"/><line x1="-1535.17" y1="-232.26" x2="2094.83" y2="815.34" stroke="#cbd0d5" stroke-width="1"/><line x1="-758.03" y1="1212.82" x2="1334.77" y2="-597.98" stroke="#cbd0d5" stroke-width="1"/><line x1="-1523.55" y1="-242.32" x2="2106.45" y2="805.28" stroke="#cbd0d5" stroke-width="1"/><line x1="-737.87" y1="1218.64" x2="1354.93" y2="-592.16" stroke="#cbd0d5" stroke-width="1"/><line x1="-1511.92" y1="-252.38" x2="2118.08" y2="795.22" stroke="#cbd0d5" stroke-width="1"/><line x1="-717.7" y1="1224.46" x2="1375.1" y2="-586.34" stroke="#cbd0d5" stroke-width="1"/><line x1="-1500.29" y1="-262.44" x2="2129.71" y2="785.16" stroke="#cbd0d5" stroke-width="1"/><line x1="-697.53" y1="1230.28" x2="1395.27" y2="-580.52" stroke="#cbd0d5" stroke-width="1"/><line x1="-1488.67" y1="-272.5" x2="2141.33" y2="775.1" stroke="#cbd0d5" stroke-width="1"/><line x1="-677.37" y1="1236.1" x2="1415.43" y2="-574.7" stroke="#cbd0d5" stroke-width="1"/><line x1="-1477.04" y1="-282.56" x2="2152.96" y2="765.04" stroke="#cbd0d5" stroke-width="1"/><line x1="-657.2" y1="1241.92" x2="1435.6" y2="-568.88" stroke="#cbd0d5" stroke-width="1"/><line x1="-1465.41" y1="-292.62" x2="2164.59" y2="754.98" stroke="#cbd0d5" stroke-width="1"/><line x1="-637.03" y1="1247.74" x2="1455.77" y2="-563.06" stroke="#cbd0d5" stroke-width="1"/><line x1="-1453.79" y1="-302.68" x2="2176.21" y2="744.92" stroke="#cbd0d5" stroke-width="1"/><line x1="-616.87" y1="1253.56" x2="1475.93" y2="-557.24" stroke="#cbd0d5" stroke-width="1"/><line x1="-1442.16" y1="-312.74" x2="2187.84" y2="734.86" stroke="#cbd0d5" stroke-width="1"/><line x1="-596.7" y1="1259.38" x2="1496.1" y2="-551.42" stroke="#cbd0d5" stroke-width="1"/><line x1="-1430.53" y1="-322.8" x2="2199.47" y2="724.8" stroke="#c6ccd2" stroke-width="1.6"/><line x1="-576.53" y1="1265.2" x2="1516.27" y2="-545.6" stroke="#c6ccd2" stroke-width="1.6"/><line x1="-1418.91" y1="-332.86" x2="2211.09" y2="714.74" stroke="#cbd0d5" stroke-width="1"/><line x1="-556.37" y1="1271.02" x2="1536.43" y2="-539.78" stroke="#cbd0d5" stroke-width="1"/><line x1="-1407.28" y1="-342.92" x2="2222.72" y2="704.68" stroke="#cbd0d5" stroke-width="1"/><line x1="-536.2" y1="1276.84" x2="1556.6" y2="-533.96" stroke="#cbd0d5" stroke-width="1"/><line x1="-1395.65" y1="-352.98" x2="2234.35" y2="694.62" stroke="#cbd0d5" stroke-width="1"/><line x1="-516.03" y1="1282.66" x2="1576.77" y2="-528.14" stroke="#cbd0d5" stroke-width="1"/><line x1="-1384.03" y1="-363.04" x2="2245.97" y2="684.56" stroke="#cbd0d5" stroke-width="1"/><line x1="-495.87" y1="1288.48" x2="1596.93" y2="-522.32" stroke="#cbd0d5" stroke-width="1"/><line x1="-1372.4" y1="-373.1" x2="2257.6" y2="674.5" stroke="#cbd0d5" stroke-width="1"/><line x1="-475.7" y1="1294.3" x2="1617.1" y2="-516.5" stroke="#cbd0d5" stroke-width="1"/><line x1="-1360.77" y1="-383.16" x2="2269.23" y2="664.44" stroke="#cbd0d5" stroke-width="1"/><line x1="-455.53" y1="1300.12" x2="1637.27" y2="-510.68" stroke="#cbd0d5" stroke-width="1"/><line x1="-1349.15" y1="-393.22" x2="2280.85" y2="654.38" stroke="#cbd0d5" stroke-width="1"/><line x1="-435.37" y1="1305.94" x2="1657.43" y2="-504.86" stroke="#cbd0d5" stroke-width="1"/><line x1="-1337.52" y1="-403.28" x2="2292.48" y2="644.32" stroke="#cbd0d5" stroke-width="1"/><line x1="-415.2" y1="1311.76" x2="1677.6" y2="-499.04" stroke="#cbd0d5" stroke-width="1"/><line x1="-1325.89" y1="-413.34" x2="2304.11" y2="634.26" stroke="#cbd0d5" stroke-width="1"/><line x1="-395.03" y1="1317.58" x2="1697.77" y2="-493.22" stroke="#cbd0d5" stroke-width="1"/><line x1="-1314.27" y1="-423.4" x2="2315.73" y2="624.2" stroke="#c6ccd2" stroke-width="1.6"/><line x1="-374.87" y1="1323.4" x2="1717.93" y2="-487.4" stroke="#c6ccd2" stroke-width="1.6"/><line x1="-1302.64" y1="-433.46" x2="2327.36" y2="614.14" stroke="#cbd0d5" stroke-width="1"/><line x1="-354.7" y1="1329.22" x2="1738.1" y2="-481.58" stroke="#cbd0d5" stroke-width="1"/><line x1="-1291.01" y1="-443.52" x2="2338.99" y2="604.08" stroke="#cbd0d5" stroke-width="1"/><line x1="-334.53" y1="1335.04" x2="1758.27" y2="-475.76" stroke="#cbd0d5" stroke-width="1"/><line x1="-1279.39" y1="-453.58" x2="2350.61" y2="594.02" stroke="#cbd0d5" stroke-width="1"/><line x1="-314.37" y1="1340.86" x2="1778.43" y2="-469.94" stroke="#cbd0d5" stroke-width="1"/><line x1="-1267.76" y1="-463.64" x2="2362.24" y2="583.96" stroke="#cbd0d5" stroke-width="1"/><line x1="-294.2" y1="1346.68" x2="1798.6" y2="-464.12" stroke="#cbd0d5" stroke-width="1"/><line x1="-1256.13" y1="-473.7" x2="2373.87" y2="573.9" stroke="#cbd0d5" stroke-width="1"/><line x1="-274.03" y1="1352.5" x2="1818.77" y2="-458.3" stroke="#cbd0d5" stroke-width="1"/><line x1="-1244.51" y1="-483.76" x2="2385.49" y2="563.84" stroke="#cbd0d5" stroke-width="1"/><line x1="-253.87" y1="1358.32" x2="1838.93" y2="-452.48" stroke="#cbd0d5" stroke-width="1"/><line x1="-1232.88" y1="-493.82" x2="2397.12" y2="553.78" stroke="#cbd0d5" stroke-width="1"/><line x1="-233.7" y1="1364.14" x2="1859.1" y2="-446.66" stroke="#cbd0d5" stroke-width="1"/><line x1="-1221.25" y1="-503.88" x2="2408.75" y2="543.72" stroke="#cbd0d5" stroke-width="1"/><line x1="-213.53" y1="1369.96" x2="1879.27" y2="-440.84" stroke="#cbd0d5" stroke-width="1"/><line x1="-1209.63" y1="-513.94" x2="2420.37" y2="533.66" stroke="#cbd0d5" stroke-width="1"/><line x1="-193.37" y1="1375.78" x2="1899.43" y2="-435.02" stroke="#cbd0d5" stroke-width="1"/><line x1="-1198" y1="-524" x2="2432" y2="523.6" stroke="#c6ccd2" stroke-width="1.6"/><line x1="-173.2" y1="1381.6" x2="1919.6" y2="-429.2" stroke="#c6ccd2" stroke-width="1.6"/><line x1="-1186.37" y1="-534.06" x2="2443.63" y2="513.54" stroke="#cbd0d5" stroke-width="1"/><line x1="-153.03" y1="1387.42" x2="1939.77" y2="-423.38" stroke="#cbd0d5" stroke-width="1"/><line x1="-1174.75" y1="-544.12" x2="2455.25" y2="503.48" stroke="#cbd0d5" stroke-width="1"/><line x1="-132.87" y1="1393.24" x2="1959.93" y2="-417.56" stroke="#cbd0d5" stroke-width="1"/><line x1="-1163.12" y1="-554.18" x2="2466.88" y2="493.42" stroke="#cbd0d5" stroke-width="1"/><line x1="-112.7" y1="1399.06" x2="1980.1" y2="-411.74" stroke="#cbd0d5" stroke-width="1"/><line x1="-1151.49" y1="-564.24" x2="2478.51" y2="483.36" stroke="#cbd0d5" stroke-width="1"/><line x1="-92.53" y1="1404.88" x2="2000.27" y2="-405.92" stroke="#cbd0d5" stroke-width="1"/><line x1="-1139.87" y1="-574.3" x2="2490.13" y2="473.3" stroke="#cbd0d5" stroke-width="1"/><line x1="-72.37" y1="1410.7" x2="2020.43" y2="-400.1" stroke="#cbd0d5" stroke-width="1"/><line x1="-1128.24" y1="-584.36" x2="2501.76" y2="463.24" stroke="#cbd0d5" stroke-width="1"/><line x1="-52.2" y1="1416.52" x2="2040.6" y2="-394.28" stroke="#cbd0d5" stroke-width="1"/><line x1="-1116.61" y1="-594.42" x2="2513.39" y2="453.18" stroke="#cbd0d5" stroke-width="1"/><line x1="-32.03" y1="1422.34" x2="2060.77" y2="-388.46" stroke="#cbd0d5" stroke-width="1"/><line x1="-1104.99" y1="-604.48" x2="2525.01" y2="443.12" stroke="#cbd0d5" stroke-width="1"/><line x1="-11.87" y1="1428.16" x2="2080.93" y2="-382.64" stroke="#cbd0d5" stroke-width="1"/><line x1="-1093.36" y1="-614.54" x2="2536.64" y2="433.06" stroke="#cbd0d5" stroke-width="1"/><line x1="8.3" y1="1433.98" x2="2101.1" y2="-376.82" stroke="#cbd0d5" stroke-width="1"/><line x1="-1081.73" y1="-624.6" x2="2548.27" y2="423" stroke="#c6ccd2" stroke-width="1.6"/><line x1="28.47" y1="1439.8" x2="2121.27" y2="-371" stroke="#c6ccd2" stroke-width="1.6"/><line x1="-1070.11" y1="-634.66" x2="2559.89" y2="412.94" stroke="#cbd0d5" stroke-width="1"/><line x1="48.63" y1="1445.62" x2="2141.43" y2="-365.18" stroke="#cbd0d5" stroke-width="1"/><line x1="-1058.48" y1="-644.72" x2="2571.52" y2="402.88" stroke="#cbd0d5" stroke-width="1"/><line x1="68.8" y1="1451.44" x2="2161.6" y2="-359.36" stroke="#cbd0d5" stroke-width="1"/><line x1="-1046.85" y1="-654.78" x2="2583.15" y2="392.82" stroke="#cbd0d5" stroke-width="1"/><line x1="88.97" y1="1457.26" x2="2181.77" y2="-353.54" stroke="#cbd0d5" stroke-width="1"/><line x1="-1035.23" y1="-664.84" x2="2594.77" y2="382.76" stroke="#cbd0d5" stroke-width="1"/><line x1="109.13" y1="1463.08" x2="2201.93" y2="-347.72" stroke="#cbd0d5" stroke-width="1"/><line x1="-1023.6" y1="-674.9" x2="2606.4" y2="372.7" stroke="#cbd0d5" stroke-width="1"/><line x1="129.3" y1="1468.9" x2="2222.1" y2="-341.9" stroke="#cbd0d5" stroke-width="1"/><line x1="-1011.97" y1="-684.96" x2="2618.03" y2="362.64" stroke="#cbd0d5" stroke-width="1"/><line x1="149.47" y1="1474.72" x2="2242.27" y2="-336.08" stroke="#cbd0d5" stroke-width="1"/><line x1="-1000.35" y1="-695.02" x2="2629.65" y2="352.58" stroke="#cbd0d5" stroke-width="1"/><line x1="169.63" y1="1480.54" x2="2262.43" y2="-330.26" stroke="#cbd0d5" stroke-width="1"/><line x1="-988.72" y1="-705.08" x2="2641.28" y2="342.52" stroke="#cbd0d5" stroke-width="1"/><line x1="189.8" y1="1486.36" x2="2282.6" y2="-324.44" stroke="#cbd0d5" stroke-width="1"/><line x1="-977.09" y1="-715.14" x2="2652.91" y2="332.46" stroke="#cbd0d5" stroke-width="1"/><line x1="209.97" y1="1492.18" x2="2302.77" y2="-318.62" stroke="#cbd0d5" stroke-width="1"/><line x1="-965.47" y1="-725.2" x2="2664.53" y2="322.4" stroke="#c6ccd2" stroke-width="1.6"/><line x1="230.13" y1="1498" x2="2322.93" y2="-312.8" stroke="#c6ccd2" stroke-width="1.6"/><line x1="-953.84" y1="-735.26" x2="2676.16" y2="312.34" stroke="#cbd0d5" stroke-width="1"/><line x1="250.3" y1="1503.82" x2="2343.1" y2="-306.98" stroke="#cbd0d5" stroke-width="1"/><line x1="-942.21" y1="-745.32" x2="2687.79" y2="302.28" stroke="#cbd0d5" stroke-width="1"/><line x1="270.47" y1="1509.64" x2="2363.27" y2="-301.16" stroke="#cbd0d5" stroke-width="1"/><line x1="-930.59" y1="-755.38" x2="2699.41" y2="292.22" stroke="#cbd0d5" stroke-width="1"/><line x1="290.63" y1="1515.46" x2="2383.43" y2="-295.34" stroke="#cbd0d5" stroke-width="1"/><line x1="-918.96" y1="-765.44" x2="2711.04" y2="282.16" stroke="#cbd0d5" stroke-width="1"/><line x1="310.8" y1="1521.28" x2="2403.6" y2="-289.52" stroke="#cbd0d5" stroke-width="1"/><line x1="-907.33" y1="-775.5" x2="2722.67" y2="272.1" stroke="#cbd0d5" stroke-width="1"/><line x1="330.97" y1="1527.1" x2="2423.77" y2="-283.7" stroke="#cbd0d5" stroke-width="1"/><line x1="-895.71" y1="-785.56" x2="2734.29" y2="262.04" stroke="#cbd0d5" stroke-width="1"/><line x1="351.13" y1="1532.92" x2="2443.93" y2="-277.88" stroke="#cbd0d5" stroke-width="1"/><line x1="-884.08" y1="-795.62" x2="2745.92" y2="251.98" stroke="#cbd0d5" stroke-width="1"/><line x1="371.3" y1="1538.74" x2="2464.1" y2="-272.06" stroke="#cbd0d5" stroke-width="1"/><line x1="-872.45" y1="-805.68" x2="2757.55" y2="241.92" stroke="#cbd0d5" stroke-width="1"/><line x1="391.47" y1="1544.56" x2="2484.27" y2="-266.24" stroke="#cbd0d5" stroke-width="1"/><line x1="-860.83" y1="-815.74" x2="2769.17" y2="231.86" stroke="#cbd0d5" stroke-width="1"/><line x1="411.63" y1="1550.38" x2="2504.43" y2="-260.42" stroke="#cbd0d5" stroke-width="1"/><line x1="-849.2" y1="-825.8" x2="2780.8" y2="221.8" stroke="#c6ccd2" stroke-width="1.6"/><line x1="431.8" y1="1556.2" x2="2524.6" y2="-254.6" stroke="#c6ccd2" stroke-width="1.6"/></g>
<line x1="204.15" y1="304" x2="29.75" y2="454.9" stroke="#b08070" stroke-width="2"/>
<line x1="204.15" y1="304" x2="506.65" y2="391.3" stroke="#b08070" stroke-width="2"/>
<line x1="204.15" y1="304.7" x2="134.46" y2="365" stroke="#6666ff" stroke-width="1"/>
<line x1="204.15" y1="304.7" x2="401.8" y2="361.74" stroke="#6666ff" stroke-width="1"/>
<line x1="204.15" y1="182.5" x2="29.75" y2="333.4" stroke="#6666ff" stroke-width="2"/>
<line x1="204.15" y1="182.5" x2="506.65" y2="269.8" stroke="#6666ff" stroke-width="2"/>
<line x1="29.75" y1="333.4" x2="332.25" y2="420.7" stroke="#6666ff" stroke-width="2"/>
<line x1="332.25" y1="420.7" x2="506.65" y2="269.8" stroke="#6666ff" stroke-width="1.4"/>
<line x1="29.75" y1="454.7" x2="332.25" y2="542" stroke="#b08070" stroke-width="1"/>
<line x1="29.75" y1="455.7" x2="332.25" y2="543" stroke="#6666ff" stroke-width="1"/>
<line x1="332.25" y1="541.7" x2="506.65" y2="390.8" stroke="#6666ff" stroke-width="1.2"/>
<line x1="29.05" y1="454.4" x2="29.05" y2="539" stroke="#d2d2f2" stroke-width="2"/>
<line x1="332.25" y1="541.7" x2="332.25" y2="626.3" stroke="#d2d2f2" stroke-width="2"/>
<line x1="506.65" y1="390.8" x2="506.65" y2="475.4" stroke="#d2d2f2" stroke-width="2"/>
<line x1="204.15" y1="303.5" x2="204.15" y2="382.73" stroke="#d2d2f2" stroke-width="2"/>
<line x1="29.75" y1="333.4" x2="29.75" y2="454.4" stroke="#0000ff" stroke-width="1.2" stroke-dasharray="5.5,5.5"/>
<line x1="506.65" y1="269.8" x2="506.65" y2="390.8" stroke="#0000ff" stroke-width="1.2" stroke-dasharray="5.5,5.5"/>
<line x1="332.65" y1="420.7" x2="332.65" y2="541.7" stroke="#ff60e0" stroke-width="1.0"/>
<line x1="332.25" y1="420.7" x2="332.25" y2="541.7" stroke="#0000ff" stroke-width="2" stroke-dasharray="5.5,6"/>
<line x1="204.15" y1="13.7" x2="29.75" y2="164.6" stroke="#ff40ff" stroke-width="1"/>
<line x1="204.15" y1="13.7" x2="506.65" y2="101" stroke="#ff40ff" stroke-width="1"/>
<line x1="29.75" y1="164.6" x2="332.25" y2="251.9" stroke="#ff40ff" stroke-width="1"/>
<line x1="332.25" y1="251.9" x2="506.65" y2="101" stroke="#ff40ff" stroke-width="1"/>
<line x1="204.15" y1="13.7" x2="204.15" y2="182.5" stroke="#ff40ff" stroke-width="1"/>
<line x1="29.75" y1="164.6" x2="29.75" y2="333.4" stroke="#ff40ff" stroke-width="1"/>
<line x1="506.65" y1="101" x2="506.65" y2="269.8" stroke="#ff40ff" stroke-width="1"/>
<line x1="332.25" y1="251.9" x2="332.25" y2="420.7" stroke="#ff40ff" stroke-width="1"/>
<line x1="268.2" y1="301.6" x2="1175.7" y2="563.5" stroke="#ff0000" stroke-width="2"/>
<line x1="268.2" y1="301.6" x2="791.4" y2="-151.1" stroke="#00ff00" stroke-width="2"/>
<defs><linearGradient id="g0" gradientUnits="userSpaceOnUse" x1="168.19" y1="352.53" x2="211.08" y2="203.92"><stop offset="0.0000" stop-color="#000055"/><stop offset="0.0312" stop-color="#0000f8"/><stop offset="0.0938" stop-color="#cd39d7"/><stop offset="0.1562" stop-color="#ff6a97"/><stop offset="0.2188" stop-color="#ffa150"/><stop offset="0.2812" stop-color="#ffc922"/><stop offset="0.3438" stop-color="#fff21a"/><stop offset="0.4062" stop-color="#fff88c"/><stop offset="0.4688" stop-color="#fffee5"/><stop offset="0.5312" stop-color="#fffee5"/><stop offset="0.5938" stop-color="#fff88c"/><stop offset="0.6562" stop-color="#fff21a"/><stop offset="0.7188" stop-color="#ffc922"/><stop offset="0.7812" stop-color="#ffa150"/><stop offset="0.8438" stop-color="#ff6a97"/><stop offset="0.9062" stop-color="#cd39d7"/><stop offset="0.9688" stop-color="#0000f8"/><stop offset="1.0000" stop-color="#000055"/></linearGradient><linearGradient id="g1" gradientUnits="userSpaceOnUse" x1="183.31" y1="356.9" x2="226.2" y2="208.29"><stop offset="0.0000" stop-color="#000055"/><stop offset="0.0312" stop-color="#000090"/><stop offset="0.0938" stop-color="#0000cb"/><stop offset="0.1562" stop-color="#0000f0"/><stop offset="0.2188" stop-color="#1000ff"/><stop offset="0.2812" stop-color="#2800ff"/><stop offset="0.3438" stop-color="#4400ff"/><stop offset="0.4062" stop-color="#5800ff"/><stop offset="0.4688" stop-color="#6c00ff"/><stop offset="0.5312" stop-color="#6c00ff"/><stop offset="0.5938" stop-color="#5800ff"/><stop offset="0.6562" stop-color="#4400ff"/><stop offset="0.7188" stop-color="#2800ff"/><stop offset="0.7812" stop-color="#1000ff"/><stop offset="0.8438" stop-color="#0000f0"/><stop offset="0.9062" stop-color="#0000cb"/><stop offset="0.9688" stop-color="#000090"/><stop offset="1.0000" stop-color="#000055"/></linearGradient><linearGradient id="g2" gradientUnits="userSpaceOnUse" x1="198.44" y1="361.26" x2="241.33" y2="212.65"><stop offset="0.0000" stop-color="#000055"/><stop offset="0.0312" stop-color="#000085"/><stop offset="0.0938" stop-color="#0000c4"/><stop offset="0.1562" stop-color="#0000e9"/><stop offset="0.2188" stop-color="#0800ff"/><stop offset="0.2812" stop-color="#2000ff"/><stop offset="0.3438" stop-color="#3a00ff"/><stop offset="0.4062" stop-color="#5800ff"/><stop offset="0.4688" stop-color="#6c00ff"/><stop offset="0.5312" stop-color="#6c00ff"/><stop offset="0.5938" stop-color="#5800ff"/><stop offset="0.6562" stop-color="#3a00ff"/><stop offset="0.7188" stop-color="#2000ff"/><stop offset="0.7812" stop-color="#0800ff"/><stop offset="0.8438" stop-color="#0000e9"/><stop offset="0.9062" stop-color="#0000c4"/><stop offset="0.9688" stop-color="#000085"/><stop offset="1.0000" stop-color="#000055"/></linearGradient><linearGradient id="g3" gradientUnits="userSpaceOnUse" x1="213.56" y1="365.63" x2="256.45" y2="217.02"><stop offset="0.0000" stop-color="#000055"/><stop offset="0.0312" stop-color="#0000e1"/><stop offset="0.0938" stop-color="#6200ff"/><stop offset="0.1562" stop-color="#bb2ce2"/><stop offset="0.2188" stop-color="#e74ac1"/><stop offset="0.2812" stop-color="#ff669d"/><stop offset="0.3438" stop-color="#ff8776"/><stop offset="0.4062" stop-color="#ff9a5b"/><stop offset="0.4688" stop-color="#ffa44b"/><stop offset="0.5312" stop-color="#ffa44b"/><stop offset="0.5938" stop-color="#ff9a5b"/><stop offset="0.6562" stop-color="#ff8776"/><stop offset="0.7188" stop-color="#ff669d"/><stop offset="0.7812" stop-color="#e74ac1"/><stop offset="0.8438" stop-color="#bb2ce2"/><stop offset="0.9062" stop-color="#6200ff"/><stop offset="0.9688" stop-color="#0000e1"/><stop offset="1.0000" stop-color="#000055"/></linearGradient></defs>
<polygon points="168.19,352.53 183.31,356.9 322.83,236.18 307.71,231.81" fill="url(#g0)"/><polygon points="183.31,356.9 198.44,361.26 337.96,240.54 322.83,236.18" fill="url(#g1)"/><polygon points="198.44,361.26 213.56,365.63 353.08,244.91 337.96,240.54" fill="url(#g2)"/><polygon points="213.56,365.63 228.69,369.99 368.21,249.27 353.08,244.91" fill="url(#g3)"/>
<line x1="177.5" y1="353.2" x2="182.73" y2="348.68" stroke="#d8d8e8" stroke-width="1" stroke-opacity="0.8" stroke-dasharray="1.5,1.5"/><line x1="222.87" y1="366.3" x2="228.1" y2="361.77" stroke="#d8d8e8" stroke-width="1" stroke-opacity="0.8" stroke-dasharray="1.5,1.5"/><line x1="186.22" y1="345.66" x2="191.45" y2="341.13" stroke="#d8d8e8" stroke-width="1" stroke-opacity="0.8" stroke-dasharray="1.5,1.5"/><line x1="231.59" y1="358.75" x2="236.82" y2="354.23" stroke="#d8d8e8" stroke-width="1" stroke-opacity="0.8" stroke-dasharray="1.5,1.5"/><line x1="194.94" y1="338.11" x2="200.17" y2="333.59" stroke="#d8d8e8" stroke-width="1" stroke-opacity="0.8" stroke-dasharray="1.5,1.5"/><line x1="240.31" y1="351.21" x2="245.54" y2="346.68" stroke="#d8d8e8" stroke-width="1" stroke-opacity="0.8" stroke-dasharray="1.5,1.5"/><line x1="203.66" y1="330.57" x2="208.89" y2="326.04" stroke="#d8d8e8" stroke-width="1" stroke-opacity="0.8" stroke-dasharray="1.5,1.5"/><line x1="249.03" y1="343.66" x2="254.26" y2="339.14" stroke="#d8d8e8" stroke-width="1" stroke-opacity="0.8" stroke-dasharray="1.5,1.5"/><line x1="212.38" y1="323.02" x2="217.61" y2="318.5" stroke="#d8d8e8" stroke-width="1" stroke-opacity="0.8" stroke-dasharray="1.5,1.5"/><line x1="257.75" y1="336.12" x2="262.98" y2="331.59" stroke="#d8d8e8" stroke-width="1" stroke-opacity="0.8" stroke-dasharray="1.5,1.5"/><line x1="221.1" y1="315.48" x2="226.33" y2="310.95" stroke="#d8d8e8" stroke-width="1" stroke-opacity="0.8" stroke-dasharray="1.5,1.5"/><line x1="266.47" y1="328.57" x2="271.7" y2="324.05" stroke="#d8d8e8" stroke-width="1" stroke-opacity="0.8" stroke-dasharray="1.5,1.5"/><line x1="229.82" y1="307.93" x2="235.05" y2="303.41" stroke="#d8d8e8" stroke-width="1" stroke-opacity="0.8" stroke-dasharray="1.5,1.5"/><line x1="275.19" y1="321.03" x2="280.42" y2="316.5" stroke="#d8d8e8" stroke-width="1" stroke-opacity="0.8" stroke-dasharray="1.5,1.5"/><line x1="238.54" y1="300.39" x2="243.77" y2="295.86" stroke="#d8d8e8" stroke-width="1" stroke-opacity="0.8" stroke-dasharray="1.5,1.5"/><line x1="283.91" y1="313.48" x2="289.14" y2="308.96" stroke="#d8d8e8" stroke-width="1" stroke-opacity="0.8" stroke-dasharray="1.5,1.5"/><line x1="247.26" y1="292.84" x2="252.49" y2="288.32" stroke="#d8d8e8" stroke-width="1" stroke-opacity="0.8" stroke-dasharray="1.5,1.5"/><line x1="292.63" y1="305.94" x2="297.86" y2="301.41" stroke="#d8d8e8" stroke-width="1" stroke-opacity="0.8" stroke-dasharray="1.5,1.5"/><line x1="255.98" y1="285.3" x2="261.21" y2="280.77" stroke="#d8d8e8" stroke-width="1" stroke-opacity="0.8" stroke-dasharray="1.5,1.5"/><line x1="301.35" y1="298.39" x2="306.58" y2="293.87" stroke="#d8d8e8" stroke-width="1" stroke-opacity="0.8" stroke-dasharray="1.5,1.5"/><line x1="264.7" y1="277.75" x2="269.93" y2="273.23" stroke="#d8d8e8" stroke-width="1" stroke-opacity="0.8" stroke-dasharray="1.5,1.5"/><line x1="310.07" y1="290.85" x2="315.3" y2="286.32" stroke="#d8d8e8" stroke-width="1" stroke-opacity="0.8" stroke-dasharray="1.5,1.5"/><line x1="273.42" y1="270.21" x2="278.65" y2="265.68" stroke="#d8d8e8" stroke-width="1" stroke-opacity="0.8" stroke-dasharray="1.5,1.5"/><line x1="318.79" y1="283.3" x2="324.02" y2="278.78" stroke="#d8d8e8" stroke-width="1" stroke-opacity="0.8" stroke-dasharray="1.5,1.5"/><line x1="282.14" y1="262.66" x2="287.37" y2="258.14" stroke="#d8d8e8" stroke-width="1" stroke-opacity="0.8" stroke-dasharray="1.5,1.5"/><line x1="327.51" y1="275.76" x2="332.74" y2="271.23" stroke="#d8d8e8" stroke-width="1" stroke-opacity="0.8" stroke-dasharray="1.5,1.5"/><line x1="290.86" y1="255.12" x2="296.09" y2="250.59" stroke="#d8d8e8" stroke-width="1" stroke-opacity="0.8" stroke-dasharray="1.5,1.5"/><line x1="336.23" y1="268.21" x2="341.46" y2="263.69" stroke="#d8d8e8" stroke-width="1" stroke-opacity="0.8" stroke-dasharray="1.5,1.5"/><line x1="299.58" y1="247.57" x2="304.81" y2="243.05" stroke="#d8d8e8" stroke-width="1" stroke-opacity="0.8" stroke-dasharray="1.5,1.5"/><line x1="344.95" y1="260.67" x2="350.18" y2="256.14" stroke="#d8d8e8" stroke-width="1" stroke-opacity="0.8" stroke-dasharray="1.5,1.5"/><line x1="308.3" y1="240.03" x2="313.53" y2="235.5" stroke="#d8d8e8" stroke-width="1" stroke-opacity="0.8" stroke-dasharray="1.5,1.5"/><line x1="353.67" y1="253.12" x2="358.9" y2="248.6" stroke="#d8d8e8" stroke-width="1" stroke-opacity="0.8" stroke-dasharray="1.5,1.5"/><line x1="196.43" y1="347.3" x2="223.65" y2="355.15" stroke="#ffffff" stroke-width="1.2" stroke-opacity="0.8" stroke-dasharray="2.2,3"/><line x1="208.11" y1="337.19" x2="235.33" y2="345.04" stroke="#ffffff" stroke-width="1.2" stroke-opacity="0.8" stroke-dasharray="2.2,3"/><line x1="231.31" y1="317.12" x2="258.53" y2="324.97" stroke="#ffffff" stroke-width="1.2" stroke-opacity="0.8" stroke-dasharray="2.2,3"/><line x1="242.99" y1="307.01" x2="270.21" y2="314.86" stroke="#ffffff" stroke-width="1.2" stroke-opacity="0.8" stroke-dasharray="2.2,3"/><line x1="266.19" y1="286.94" x2="293.41" y2="294.79" stroke="#ffffff" stroke-width="1.2" stroke-opacity="0.8" stroke-dasharray="2.2,3"/><line x1="277.87" y1="276.83" x2="305.09" y2="284.68" stroke="#ffffff" stroke-width="1.2" stroke-opacity="0.8" stroke-dasharray="2.2,3"/><line x1="301.07" y1="256.76" x2="328.29" y2="264.61" stroke="#ffffff" stroke-width="1.2" stroke-opacity="0.8" stroke-dasharray="2.2,3"/><line x1="312.75" y1="246.65" x2="339.97" y2="254.5" stroke="#ffffff" stroke-width="1.2" stroke-opacity="0.8" stroke-dasharray="2.2,3"/>
<rect x="280" y="291" width="1" height="1" fill="#00ff00"/>
<line x1="183.31" y1="356.9" x2="322.83" y2="236.18" stroke="#ff0000" stroke-width="1"/><line x1="198.44" y1="361.26" x2="337.96" y2="240.54" stroke="#ff0000" stroke-width="1"/><line x1="213.56" y1="365.63" x2="353.08" y2="244.91" stroke="#ff0000" stroke-width="1"/><line x1="176.91" y1="344.99" x2="237.41" y2="362.45" stroke="#ff0000" stroke-width="1"/><line x1="185.63" y1="337.44" x2="246.13" y2="354.9" stroke="#ff0000" stroke-width="1"/><line x1="194.35" y1="329.9" x2="254.85" y2="347.36" stroke="#ff0000" stroke-width="1"/><line x1="203.07" y1="322.35" x2="263.57" y2="339.81" stroke="#ff0000" stroke-width="1"/><line x1="211.79" y1="314.81" x2="272.29" y2="332.27" stroke="#ff0000" stroke-width="1"/><line x1="220.51" y1="307.26" x2="281.01" y2="324.72" stroke="#ff0000" stroke-width="1"/><line x1="229.23" y1="299.72" x2="289.73" y2="317.18" stroke="#ff0000" stroke-width="1"/><line x1="237.95" y1="292.17" x2="298.45" y2="309.63" stroke="#ff0000" stroke-width="1"/><line x1="246.67" y1="284.62" x2="307.17" y2="302.09" stroke="#ff0000" stroke-width="1"/><line x1="255.39" y1="277.08" x2="315.89" y2="294.54" stroke="#ff0000" stroke-width="1"/><line x1="264.11" y1="269.54" x2="324.61" y2="287" stroke="#ff0000" stroke-width="1"/><line x1="272.83" y1="261.99" x2="333.33" y2="279.45" stroke="#ff0000" stroke-width="1"/><line x1="281.55" y1="254.45" x2="342.05" y2="271.91" stroke="#ff0000" stroke-width="1"/><line x1="290.27" y1="246.9" x2="350.77" y2="264.36" stroke="#ff0000" stroke-width="1"/><line x1="298.99" y1="239.36" x2="359.49" y2="256.82" stroke="#ff0000" stroke-width="1"/>
<line x1="168.19" y1="352.53" x2="307.71" y2="231.81" stroke="#ff0000" stroke-width="1.2"/>
<line x1="307.71" y1="231.81" x2="368.21" y2="249.27" stroke="#ff0000" stroke-width="1.2"/>
<line x1="168.19" y1="352.53" x2="228.69" y2="369.99" stroke="#ff0000" stroke-width="2"/>
<line x1="228.69" y1="369.99" x2="368.21" y2="249.27" stroke="#ff0000" stroke-width="2"/>
<line x1="29.75" y1="164.6" x2="332.25" y2="251.9" stroke="#ff40ff" stroke-width="1"/>
<line x1="332.25" y1="251.9" x2="506.65" y2="101" stroke="#ff40ff" stroke-width="1"/>
<line x1="332.25" y1="251.9" x2="332.25" y2="420.7" stroke="#ff40ff" stroke-width="1"/>
<defs><linearGradient id="mg" gradientUnits="userSpaceOnUse" x1="70" y1="80" x2="76" y2="75"><stop offset="0" stop-color="#b81aa8"/><stop offset="0.45" stop-color="#ff48ff"/><stop offset="1" stop-color="#ff40ff"/></linearGradient><linearGradient id="mh" gradientUnits="userSpaceOnUse" x1="80" y1="97" x2="89" y2="90"><stop offset="0" stop-color="#c020b0"/><stop offset="0.5" stop-color="#ff48ff"/><stop offset="1" stop-color="#e030e0"/></linearGradient></defs>
<polygon points="69.2,74.1 59.5,81.6 52.8,82.4 42.8,94.8 48.2,94.8 62.6,88.2 62.4,84.9 69.9,79.0 70.6,75.1" fill="#3400cc" stroke="#1a0050" stroke-width="0.7"/>
<polygon points="52.8,82.4 42.8,94.8 45.3,94.4 56.2,82.2" fill="#2fa4a4"/>
<polygon points="68.8,74.5 72.3,74.5 87.0,91.1 89.5,90.4 94.7,108.3 78.7,97.5 80.9,95.5 69.1,80.2" fill="url(#mg)" stroke="#6a1060" stroke-width="0.8"/>
<polygon points="80.9,95.5 87.0,91.1 89.5,90.4 94.7,108.3 78.7,97.5" fill="url(#mh)"/>
<polygon points="68.8,74.5 72.3,74.5 87.0,91.1 89.5,90.4 94.7,108.3 78.7,97.5 80.9,95.5 69.1,80.2" fill="none" stroke="#6a1060" stroke-width="0.8"/>
<rect x="524.5" y="26.5" width="140.0" height="339" fill="#f4f4f4" stroke="#000" stroke-width="1"/><line x1="524.5" y1="51.5" x2="664.5" y2="51.5" stroke="#000" stroke-width="1"/><line x1="524.5" y1="77.5" x2="664.5" y2="77.5" stroke="#000" stroke-width="1"/><line x1="524.5" y1="273.5" x2="664.5" y2="273.5" stroke="#000" stroke-width="1"/><defs><linearGradient id="cb" x1="0" y1="0" x2="0" y2="1"><stop offset="0" stop-color="#ffffff"/><stop offset="0.1" stop-color="#fff000"/><stop offset="0.17" stop-color="#ffb038"/><stop offset="0.27" stop-color="#ff8c70"/><stop offset="0.37" stop-color="#ff5ca8"/><stop offset="0.45" stop-color="#d840d0"/><stop offset="0.49" stop-color="#c030e0"/><stop offset="0.57" stop-color="#8000ff"/><stop offset="0.65" stop-color="#3000ff"/><stop offset="0.71" stop-color="#0000ff"/><stop offset="0.8" stop-color="#0000c0"/><stop offset="0.87" stop-color="#000070"/><stop offset="0.94" stop-color="#000030"/><stop offset="1" stop-color="#000000"/></linearGradient></defs><rect x="539" y="88" width="21" height="170" fill="url(#cb)"/><text x="538.3" y="43.3" class="t" style="font-size:15px" textLength="74.2" lengthAdjust="spacingAndGlyphs">JsMagTotal</text><text x="538.3" y="68.9" class="t" style="font-size:15px" textLength="80.5" lengthAdjust="spacingAndGlyphs">Type: Linear</text><text x="571" y="94.4" class="t" style="font-size:14px">0.0428</text><text x="571" y="111.37" class="t" style="font-size:14px">0.0385</text><text x="571" y="128.34" class="t" style="font-size:14px">0.0342</text><text x="571" y="145.31" class="t" style="font-size:14px">0.0299</text><text x="571" y="162.28" class="t" style="font-size:14px">0.0257</text><text x="571" y="179.25" class="t" style="font-size:14px">0.0214</text><text x="571" y="196.22" class="t" style="font-size:14px">0.0171</text><text x="571" y="213.19" class="t" style="font-size:14px">0.0128</text><text x="571" y="230.16" class="t" style="font-size:14px">0.00856</text><text x="571" y="247.13" class="t" style="font-size:14px">0.00428</text><text x="571" y="264.1" class="t" style="font-size:14px">0</text><text x="539" y="289.8" class="t" style="font-size:14px" textLength="77.6" lengthAdjust="spacingAndGlyphs">Max: 0.0428</text><text x="539" y="306.55" class="t" style="font-size:14px" textLength="81.6" lengthAdjust="spacingAndGlyphs">Min: 0.00319</text><text x="539" y="323.3" class="t" style="font-size:14px" textLength="66.5" lengthAdjust="spacingAndGlyphs">Units: A/m</text><text x="539" y="340.05" class="t" style="font-size:14px" textLength="86.4" lengthAdjust="spacingAndGlyphs">Mean: 0.0198</text><text x="539" y="356.8" class="t" style="font-size:14px" textLength="71.6" lengthAdjust="spacingAndGlyphs">STD: 0.011</text>
</svg></body></html>
